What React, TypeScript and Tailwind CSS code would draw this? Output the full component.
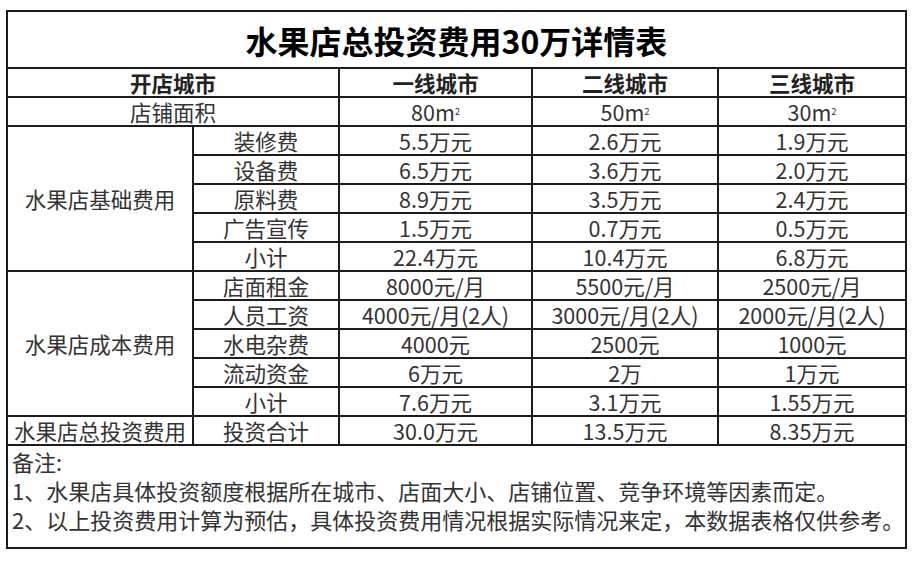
import React from "react";

const font = { fontFamily: '"Noto Sans CJK SC", "Noto Sans", sans-serif' };

function Sq({ n }: { n: string }) {
  return (
    <span>
      {n}m<sup className="relative -top-[6px] ml-[0px] text-[9px]">2</sup>
    </span>
  );
}

const basic: [string, string, string, string][] = [
  ["装修费", "5.5万元", "2.6万元", "1.9万元"],
  ["设备费", "6.5万元", "3.6万元", "2.0万元"],
  ["原料费", "8.9万元", "3.5万元", "2.4万元"],
  ["广告宣传", "1.5万元", "0.7万元", "0.5万元"],
  ["小计", "22.4万元", "10.4万元", "6.8万元"],
];

const cost: [string, string, string, string][] = [
  ["店面租金", "8000元/月", "5500元/月", "2500元/月"],
  ["人员工资", "4000元/月(2人)", "3000元/月(2人)", "2000元/月(2人)"],
  ["水电杂费", "4000元", "2500元", "1000元"],
  ["流动资金", "6万元", "2万", "1万元"],
  ["小计", "7.6万元", "3.1万元", "1.55万元"],
];

const cell = "bg-white flex items-center justify-center whitespace-nowrap leading-none";

function Rows({ rows }: { rows: [string, string, string, string][] }) {
  return (
    <>
      {rows.map((r, i) => (
        <React.Fragment key={i}>
          {r.map((c, j) => (
            <div key={j} className={cell}>
              {c}
            </div>
          ))}
        </React.Fragment>
      ))}
    </>
  );
}

export default function App() {
  return (
    <div className="w-[924px] h-[563px] bg-white pt-[10px] pl-[6px]" style={font}>
      <div className="w-[901px] grid grid-cols-[184px_144px_191px_184px_186px] grid-rows-[55px_repeat(13,27px)_101px] gap-[2px] p-[2px] bg-[#1c1c1c] text-[21.5px] text-[#333]">
        <div className={`${cell} col-span-5 text-[32px] font-bold text-black`}>水果店总投资费用30万详情表</div>

        <div className={`${cell} col-span-2 font-semibold text-[#222]`}>开店城市</div>
        <div className={`${cell} font-semibold text-[#222]`}>一线城市</div>
        <div className={`${cell} font-semibold text-[#222]`}>二线城市</div>
        <div className={`${cell} font-semibold text-[#222]`}>三线城市</div>

        <div className={`${cell} col-span-2`}>店铺面积</div>
        <div className={cell}><Sq n="80" /></div>
        <div className={cell}><Sq n="50" /></div>
        <div className={cell}><Sq n="30" /></div>

        <div className={`${cell} row-span-5`}>水果店基础费用</div>
        <Rows rows={basic} />

        <div className={`${cell} row-span-5`}>水果店成本费用</div>
        <Rows rows={cost} />

        <div className={cell}>水果店总投资费用</div>
        <div className={cell}>投资合计</div>
        <div className={cell}>30.0万元</div>
        <div className={cell}>13.5万元</div>
        <div className={cell}>8.35万元</div>

        <div className="bg-white col-span-5 pl-[4px] pt-[1px] text-[22px] leading-[29px] whitespace-nowrap">
          <div>备注:</div>
          <div>1、水果店具体投资额度根据所在城市、店面大小、店铺位置、竞争环境等因素而定。</div>
          <div>2、以上投资费用计算为预估，具体投资费用情况根据实际情况来定，本数据表格仅供参考。</div>
        </div>
      </div>
    </div>
  );
}
